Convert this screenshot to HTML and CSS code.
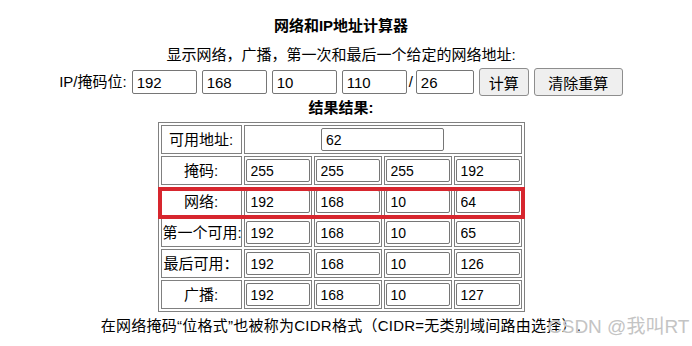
FILE: index.html
```html
<!DOCTYPE html>
<html lang="zh-CN">
<head>
<meta charset="utf-8">
<title>网络和IP地址计算器</title>
<link rel="stylesheet" href="styles.css">
</head>
<body>
<div class="page">
  <h1 class="title">网络和IP地址计算器</h1>
  <p class="subtitle">显示网络，广播，第一次和最后一个给定的网络地址:</p>
  <div class="iprow">
    <span class="iplabel">IP/掩码位:</span>
    <input class="field" value="192">
    <input class="field" value="168">
    <input class="field" value="10">
    <input class="field" value="110">
    <span class="slash">/</span>
    <input class="field mask" value="26">
    <button class="btn btn-calc">计算</button>
    <button class="btn btn-reset">清除重算</button>
  </div>
  <p class="reshead">结果结果:</p>
  <table class="result">
    <colgroup>
      <col class="c-label">
      <col class="c-oct">
      <col class="c-oct">
      <col class="c-oct">
      <col class="c-oct">
    </colgroup>
    <tr>
      <td class="lbl">可用地址:</td>
      <td colspan="4"><input class="cell-field wide" value="62"></td>
    </tr>
    <tr>
      <td class="lbl">掩码:</td>
      <td><input class="cell-field" value="255"></td>
      <td><input class="cell-field" value="255"></td>
      <td><input class="cell-field" value="255"></td>
      <td><input class="cell-field" value="192"></td>
    </tr>
    <tr>
      <td class="lbl">网络:</td>
      <td><input class="cell-field" value="192"></td>
      <td><input class="cell-field" value="168"></td>
      <td><input class="cell-field" value="10"></td>
      <td><input class="cell-field" value="64"></td>
    </tr>
    <tr>
      <td class="lbl">第一个可用:</td>
      <td><input class="cell-field" value="192"></td>
      <td><input class="cell-field" value="168"></td>
      <td><input class="cell-field" value="10"></td>
      <td><input class="cell-field" value="65"></td>
    </tr>
    <tr>
      <td class="lbl">最后可用：</td>
      <td><input class="cell-field" value="192"></td>
      <td><input class="cell-field" value="168"></td>
      <td><input class="cell-field" value="10"></td>
      <td><input class="cell-field" value="126"></td>
    </tr>
    <tr>
      <td class="lbl">广播:</td>
      <td><input class="cell-field" value="192"></td>
      <td><input class="cell-field" value="168"></td>
      <td><input class="cell-field" value="10"></td>
      <td><input class="cell-field" value="127"></td>
    </tr>
  </table>
  <p class="note">在网络掩码“位格式”也被称为CIDR格式（CIDR=无类别域间路由选择）.</p>
  <div class="highlight"></div>
  <div class="watermark">CSDN @我叫RT</div>
</div>
</body>
</html>
```

FILE: styles.css
```css
body {
  margin: 0;
  background: #ffffff;
  font-family: "Liberation Sans", "Noto Sans CJK SC", sans-serif;
  font-size: 15px;
  color: #000000;
}

.page {
  position: relative;
  width: 682px;
  height: 346px;
  text-align: center;
}

.title {
  margin: 0;
  padding-top: 16px;
  font-size: 15px;
  font-weight: bold;
  line-height: 20px;
}

.subtitle {
  margin: 9px 0 0;
  line-height: 20px;
}

.iprow {
  margin-top: 3px;
  height: 28px;
  display: flex;
  justify-content: center;
  align-items: center;
}

.iplabel {
  margin-right: 5px;
  line-height: 20px;
}

.field {
  box-sizing: border-box;
  width: 65px;
  height: 24px;
  margin: 0;
  padding: 0 4px;
  border: 1px solid #767676;
  border-radius: 2px;
  background: #ffffff;
  color: #000000;
  font: 15px "Liberation Sans", sans-serif;
}

.field + .field {
  margin-left: 5px;
}

.slash {
  margin: 0 3px 0 2px;
  line-height: 20px;
}

.mask {
  width: 58px;
}

.btn {
  box-sizing: border-box;
  height: 28px;
  margin: 0 0 0 5px;
  padding: 0;
  border: 1px solid #8d8d8d;
  border-radius: 3px;
  background: #efefef;
  color: #000000;
  font: 15px "Noto Sans CJK SC", sans-serif;
}

.btn-calc {
  width: 50px;
}

.btn-reset {
  width: 89px;
}

.reshead {
  margin: 2px 0 0;
  font-weight: bold;
  line-height: 20px;
}

.result {
  margin: 4px auto 0;
  border-collapse: separate;
  border-spacing: 2px;
  border: 1px solid #808080;
  table-layout: fixed;
  width: 367px;
}

.c-label {
  width: 81px;
}

.c-oct {
  width: 68px;
}

.result td {
  border: 1px solid #808080;
  padding: 2px 1px;
}

.result .lbl {
  text-align: center;
  white-space: nowrap;
  line-height: 20px;
}

.cell-field {
  display: block;
  box-sizing: border-box;
  width: 64px;
  height: 23px;
  margin: 0;
  padding: 0 4px;
  border: 1px solid #767676;
  border-radius: 2px;
  background: #ffffff;
  color: #000000;
  font: 14px "Liberation Sans", sans-serif;
}

.cell-field.wide {
  width: 123px;
  margin: 0 auto;
}

.note {
  margin: 4px 0 0;
  line-height: 20px;
  letter-spacing: 0.25px;
}

.highlight {
  position: absolute;
  left: 158px;
  top: 187px;
  box-sizing: border-box;
  width: 367px;
  height: 32px;
  border: 4px solid #d7262e;
}

.watermark {
  position: absolute;
  left: 548px;
  top: 316px;
  font-size: 19px;
  line-height: 22px;
  color: #c4c4c4;
  white-space: nowrap;
  text-shadow: 0 0 1px #ffffff;
}
```
